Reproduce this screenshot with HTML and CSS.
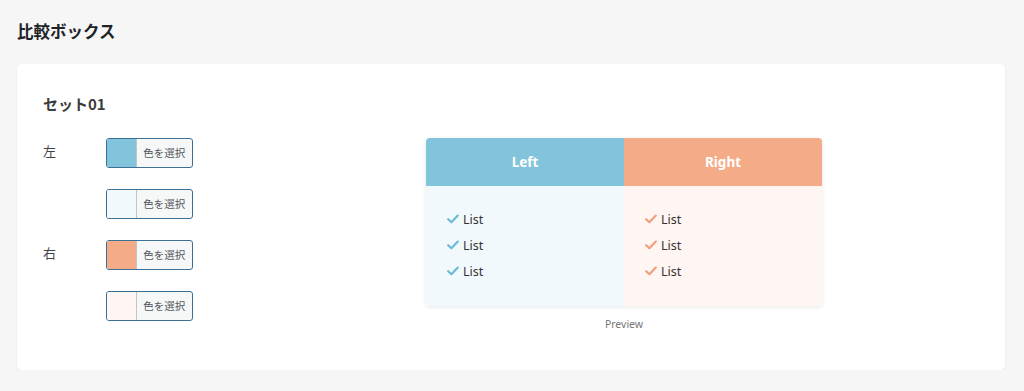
FILE: index.html
```html
<!DOCTYPE html>
<html lang="ja">
<head>
<meta charset="utf-8">
<title>比較ボックス</title>
<link rel="stylesheet" href="styles.css">
</head>
<body>
<h1 class="page-title">比較ボックス</h1>
<section class="card">
  <h2 class="set-title">セット01</h2>
  <div class="set-body">
    <div class="controls">
      <div class="ctrl-row">
        <span class="ctrl-label">左</span>
        <button class="picker"><span class="swatch sw-blue"></span><span class="picker-text">色を選択</span></button>
      </div>
      <div class="ctrl-row">
        <span class="ctrl-label"></span>
        <button class="picker"><span class="swatch sw-blue-light"></span><span class="picker-text">色を選択</span></button>
      </div>
      <div class="ctrl-row">
        <span class="ctrl-label">右</span>
        <button class="picker"><span class="swatch sw-salmon"></span><span class="picker-text">色を選択</span></button>
      </div>
      <div class="ctrl-row">
        <span class="ctrl-label"></span>
        <button class="picker"><span class="swatch sw-salmon-light"></span><span class="picker-text">色を選択</span></button>
      </div>
    </div>
    <div class="preview-wrap">
      <div class="preview">
        <div class="col col-left">
          <div class="col-head">Left</div>
          <ul class="col-list">
            <li><svg class="check" viewBox="0 0 12 10"><path d="M1.2 5.2 L4.4 8.2 L10.8 1.6" /></svg>List</li>
            <li><svg class="check" viewBox="0 0 12 10"><path d="M1.2 5.2 L4.4 8.2 L10.8 1.6" /></svg>List</li>
            <li><svg class="check" viewBox="0 0 12 10"><path d="M1.2 5.2 L4.4 8.2 L10.8 1.6" /></svg>List</li>
          </ul>
        </div>
        <div class="col col-right">
          <div class="col-head">Right</div>
          <ul class="col-list">
            <li><svg class="check" viewBox="0 0 12 10"><path d="M1.2 5.2 L4.4 8.2 L10.8 1.6" /></svg>List</li>
            <li><svg class="check" viewBox="0 0 12 10"><path d="M1.2 5.2 L4.4 8.2 L10.8 1.6" /></svg>List</li>
            <li><svg class="check" viewBox="0 0 12 10"><path d="M1.2 5.2 L4.4 8.2 L10.8 1.6" /></svg>List</li>
          </ul>
        </div>
      </div>
      <div class="preview-label">Preview</div>
    </div>
  </div>
</section>
</body>
</html>
```

FILE: styles.css
```css
* { box-sizing: border-box; }
html, body { margin: 0; padding: 0; }
body {
  background: #f6f6f6;
  font-family: "Noto Sans CJK JP", "Noto Sans", sans-serif;
  color: #1e1e1e;
  padding: 18px 19px 0 17px;
}
.page-title {
  margin: 0;
  font-size: 16.5px;
  line-height: 26px;
  font-weight: 700;
  color: #1d2327;
}
.card {
  margin-top: 20px;
  background: #fff;
  border-radius: 5px;
  box-shadow: 0 1px 3px rgba(0,0,0,0.07);
  padding: 28px 26px 37px 26px;
}
.set-title {
  margin: 0;
  font-size: 15px;
  line-height: 24px;
  font-weight: 700;
  color: #3c3c3c;
}
.set-body {
  margin-top: 22px;
  display: flex;
  align-items: flex-start;
}
.controls {
  display: flex;
  flex-direction: column;
  gap: 21px;
  width: 150px;
}
.ctrl-row {
  display: flex;
  align-items: center;
  height: 30px;
}
.ctrl-label {
  width: 63px;
  font-size: 13px;
  line-height: 18px;
  padding-bottom: 5px;
  color: #3c434a;
}
.picker {
  display: flex;
  width: 88px;
  height: 30px;
  padding: 0;
  border: 1px solid #3a6f96;
  border-radius: 3px;
  overflow: hidden;
  background: #f6f7f7;
  font-family: inherit;
}
.swatch {
  width: 30px;
  height: 100%;
  border-right: 1px solid #c3c4c7;
}
.sw-blue { background: #82c4dc; }
.sw-blue-light { background: #f2f9fd; }
.sw-salmon { background: #f3ab88; }
.sw-salmon-light { background: #fff5f2; }
.picker-text {
  flex: 1;
  font-size: 10.5px;
  line-height: 28px;
  color: #50575e;
  text-align: center;
}
.preview-wrap {
  margin-left: 233px;
  width: 396px;
}
.preview {
  display: flex;
  border-radius: 4px;
  overflow: hidden;
  box-shadow: 0 1px 4px rgba(0,0,0,0.1);
}
.col { flex: 1; }
.col-head {
  height: 48px;
  line-height: 48px;
  text-align: center;
  color: #fff;
  font-family: "Noto Sans", sans-serif;
  font-weight: 700;
  font-size: 13.5px;
}
.col-left .col-head { background: #82c4dc; }
.col-right .col-head { background: #f3ab88; }
.col-left .col-list { background: #f2f9fd; }
.col-right .col-list { background: #fff5f2; }
.col-left .check { stroke: #6bbad8; }
.col-right .check { stroke: #eea07c; }
.col-list {
  list-style: none;
  margin: 0;
  padding: 20px 0 22px 21px;
  height: 120px;
}
.col-list li {
  display: flex;
  align-items: center;
  height: 26px;
  font-family: "Noto Sans", sans-serif;
  font-size: 12.5px;
  color: #333;
}
.check {
  width: 12px;
  height: 10px;
  margin-right: 4px;
  fill: none;
  stroke-width: 2.2;
  stroke-linecap: round;
  stroke-linejoin: round;
}
.preview-label {
  margin-top: 9px;
  text-align: center;
  font-family: "Noto Sans", sans-serif;
  font-size: 10.5px;
  line-height: 18px;
  color: #777;
}
```
